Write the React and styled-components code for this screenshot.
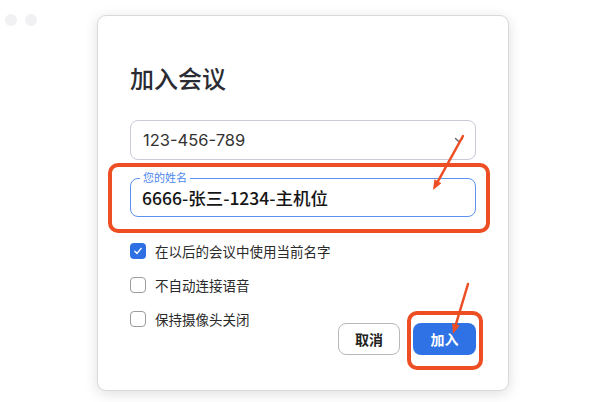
import React from "react";
import styled, { createGlobalStyle } from "styled-components";

const Global = createGlobalStyle`
  html, body { margin: 0; padding: 0; background: #ffffff; }
  body { font-family: "Inter", "Noto Sans CJK SC", sans-serif; color: #222; }
  * { box-sizing: border-box; }
`;

const Page = styled.div`
  position: relative;
  width: 600px;
  height: 402px;
  overflow: hidden;
  display: flex;
  align-items: flex-start;
  padding-left: 5px;
  background: #fff;
`;

const Lights = styled.div`
  display: flex;
  gap: 8px;
  margin-top: 14px;
`;

const Light = styled.span`
  width: 12px;
  height: 12px;
  border-radius: 50%;
  background: #f1f1f3;
`;

const Dialog = styled.div`
  margin-left: 60px;
  margin-top: 15px;
  width: 412px;
  height: 376px;
  border: 1px solid #d9d9d9;
  border-radius: 9px;
  background: #fff;
  box-shadow: 0 3px 14px rgba(0, 0, 0, 0.13);
  padding: 0 32px;
  display: flex;
  flex-direction: column;
`;

const Title = styled.h1`
  margin: 46px 0 0;
  font-size: 24px;
  line-height: 32px;
  font-weight: 500;
  color: #2b2b33;
  font-family: "Noto Sans CJK SC", sans-serif;
`;

const Select = styled.div`
  margin-top: 26px;
  height: 40px;
  border: 1px solid #cbcad8;
  border-radius: 8px;
  padding: 0 11px 0 12px;
  display: flex;
  align-items: center;
  justify-content: space-between;
  font-size: 16.5px;
  color: #333;
`;

const NameField = styled.div`
  position: relative;
  margin-top: 18px;
  height: 39px;
  border: 1.5px solid #5c92ef;
  border-radius: 8px;
  padding: 0 11px;
  display: flex;
  align-items: center;
  font-family: "Noto Sans CJK SC", sans-serif;
  font-size: 17.5px;
  font-weight: 500;
  color: #151515;
`;

const FieldLabel = styled.span`
  position: absolute;
  top: -8px;
  left: 9px;
  padding: 0 3px;
  background: #fff;
  font-size: 11px;
  line-height: 13px;
  font-weight: 400;
  color: #4b87ec;
`;

const Lower = styled.div`
  margin-top: 17px;
  display: flex;
  justify-content: space-between;
  align-items: flex-end;
`;

const Options = styled.div`
  display: flex;
  flex-direction: column;
  padding-bottom: 20px;
`;

const Option = styled.label`
  height: 34px;
  display: flex;
  align-items: center;
  gap: 9px;
  font-size: 13.5px;
  color: #2a2a2a;
  font-family: "Noto Sans CJK SC", sans-serif;
`;

const Box = styled.span`
  width: 16px;
  height: 16px;
  border-radius: 4px;
  display: flex;
  align-items: center;
  justify-content: center;
  background: ${(p) => (p.$checked ? "#2f6fe4" : "#fff")};
  border: ${(p) => (p.$checked ? "none" : "1px solid #9c9c9c")};
`;

const Buttons = styled.div`
  display: flex;
  gap: 13px;
  margin-bottom: 1px;
`;

const Button = styled.button`
  height: 32px;
  width: ${(p) => (p.$primary ? "63px" : "62px")};
  border-radius: 8px;
  font-family: "Noto Sans CJK SC", sans-serif;
  font-size: 14px;
  font-weight: 600;
  cursor: pointer;
  background: ${(p) => (p.$primary ? "#2e72e6" : "#fff")};
  color: ${(p) => (p.$primary ? "#fff" : "#222")};
  border: ${(p) => (p.$primary ? "none" : "1px solid #b8b8b8")};
`;

const Highlight = styled.div`
  position: absolute;
  left: ${(p) => p.$x}px;
  top: ${(p) => p.$y}px;
  width: ${(p) => p.$w}px;
  height: ${(p) => p.$h}px;
  border: 4.5px solid #ee4e24;
  border-radius: 10px;
  pointer-events: none;
`;

const Arrows = styled.svg`
  position: absolute;
  left: 0;
  top: 0;
  pointer-events: none;
`;

const Check = () => (
  <svg width="12" height="12" viewBox="0 0 12 12">
    <path d="M2.8 6.2 L5 8.4 L9.2 3.4" fill="none" stroke="#fff" strokeWidth="1.4" strokeLinecap="round" strokeLinejoin="round" />
  </svg>
);

const Chevron = () => (
  <svg width="10" height="8" viewBox="0 0 10 8">
    <path d="M1.5 2.5 L5 5.8 L8.5 2.5" fill="none" stroke="#666" strokeWidth="1.4" strokeLinecap="round" strokeLinejoin="round" />
  </svg>
);

const options = [
  { text: "在以后的会议中使用当前名字", checked: true },
  { text: "不自动连接语音", checked: false },
  { text: "保持摄像头关闭", checked: false },
];

export default function App() {
  return (
    <>
      <Global />
      <Page>
        <Lights>
          <Light />
          <Light />
        </Lights>
        <Dialog>
          <Title>加入会议</Title>
          <Select>
            <span>123-456-789</span>
            <Chevron />
          </Select>
          <NameField>
            <FieldLabel>您的姓名</FieldLabel>
            6666-张三-1234-主机位
          </NameField>
          <Lower>
            <Options>
              {options.map((o) => (
                <Option key={o.text}>
                  <Box $checked={o.checked}>{o.checked && <Check />}</Box>
                  {o.text}
                </Option>
              ))}
            </Options>
            <Buttons>
              <Button>取消</Button>
              <Button $primary>加入</Button>
            </Buttons>
          </Lower>
        </Dialog>
        <Highlight $x={108} $y={163} $w={382} $h={70} />
        <Highlight $x={407} $y={311} $w={76} $h={59} />
        <Arrows width="600" height="402" viewBox="0 0 600 402">
          <g stroke="#ee4e24" strokeWidth="2.5" strokeLinecap="round" fill="#ee4e24">
            <line x1="463" y1="136" x2="437.9" y2="181.3" />
            <polygon points="433,190 441.4,183.2 434.4,179.3" stroke="none" />
            <line x1="468" y1="284" x2="455.9" y2="324.4" />
            <polygon points="453,334 459.7,325.6 452,323.3" stroke="none" />
          </g>
        </Arrows>
      </Page>
    </>
  );
}
